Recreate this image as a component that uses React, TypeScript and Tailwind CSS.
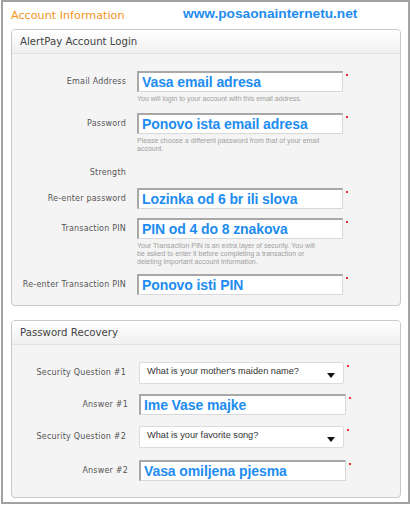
const LABEL = "font-['DejaVu_Sans',sans-serif] text-[8px] text-[#555] tracking-[0.2px]"
const BLUE = "font-['Liberation_Sans',Arial,sans-serif] font-bold text-[14px] tracking-[-0.1px] text-[#1e8cf0]"
const HELP = "font-['Liberation_Sans',Arial,sans-serif] text-[7px] leading-[8px] text-[#a0a0a0]"

function Star() {
  return <span className="ml-[3px] mt-[3px] w-[2px] h-[2px] bg-[#e33]" />
}

function TextField({ label, value, help, w = 'w-[206px]', mt }: { label: string; value: string; help?: string[]; w?: string; mt: string }) {
  return (
    <div className={`flex items-start ${mt}`}>
      <div className={`w-[114px] h-[21px] leading-[21px] text-right ${LABEL}`}>{label}</div>
      <div className="ml-[11px]">
        <div className="flex items-start">
          <div className={`${w} h-[21px] bg-white border border-t-2 border-l-2 border-t-[#a8a8a8] border-l-[#a8a8a8] border-r-[#d8d8d8] border-b-[#d8d8d8] pl-[3px] leading-[18px] ${BLUE}`}>
            {value}
          </div>
          <Star />
        </div>
        {help && (
          <div className={`mt-[3px] w-[200px] ${HELP}`}>
            {help.map((h) => (
              <div key={h}>{h}</div>
            ))}
          </div>
        )}
      </div>
    </div>
  )
}

function SelectField({ label, value, mt }: { label: string; value: string; mt: string }) {
  return (
    <div className={`flex items-start ${mt}`}>
      <div className={`w-[114px] h-[22px] leading-[22px] text-right ${LABEL}`}>{label}</div>
      <div className="ml-[13px] flex items-start">
        <div className="w-[205px] h-[22px] bg-white border border-[#dcdcdc] rounded-[2px] flex items-center pl-[7px] pr-[8px] font-['Liberation_Sans',Arial,sans-serif] text-[9.2px] text-[#333]">
          <span className="flex-1 -mt-[3px]">{value}</span>
          <svg width="8" height="5" viewBox="0 0 8 5" className="mt-[5px]">
            <path d="M0 0h8L4 5z" fill="#111" />
          </svg>
        </div>
        <Star />
      </div>
    </div>
  )
}

function Panel({ title, children, className }: { title: string; children: React.ReactNode; className?: string }) {
  return (
    <div className={`w-[390px] rounded-[4px] border border-[#c9c9c9] bg-[#f4f4f4] overflow-hidden ${className ?? ''}`}>
      <div className="h-[24px] bg-gradient-to-b from-white to-[#f0f0f0] border-b border-[#e2e2e2] pl-[8px] leading-[24px] font-['DejaVu_Sans',sans-serif] text-[10.2px] text-[#444]">
        {title}
      </div>
      {children}
    </div>
  )
}

export default function App() {
  return (
    <div className="w-[411px] h-[506px] bg-white">
      <div className="ml-px w-[409px] h-[504px] border-2 border-[#a2a2a2] pl-[8px]">
        <div className="h-[27px] flex items-center">
          <span className="w-[172px] font-['DejaVu_Sans',sans-serif] text-[11.2px] text-[#f7941d] mt-[2px]">Account Information</span>
          <span className="font-['Liberation_Sans',Arial,sans-serif] font-bold text-[13.7px] text-[#1e8cf0] -mt-[3px]">www.posaonainternetu.net</span>
        </div>
        <Panel title="AlertPay Account Login" className="h-[277px]">
          <TextField mt="mt-[17px]" label="Email Address" value="Vasa email adresa" help={['You will login to your account with this email address.']} />
          <TextField mt="mt-[10px]" label="Password" value="Ponovo ista email adresa" help={['Please choose a different password from that of your email', 'account.']} />
          <div className={`mt-[14px] w-[114px] text-right ${LABEL}`}>Strength</div>
          <TextField mt="mt-[9px]" label="Re-enter password" value="Lozinka od 6 br ili slova" />
          <TextField mt="mt-[9px]" label="Transaction PIN" value="PIN od 4 do 8 znakova" help={['Your Transaction PIN is an extra layer of security. You will', 'be asked to enter it before completing a transaction or', 'deleting important account information.']} />
          <TextField mt="mt-[8px]" label="Re-enter Transaction PIN" value="Ponovo isti PIN" />
        </Panel>
        <Panel title="Password Recovery" className="mt-[14px] h-[178px]">
          <SelectField mt="mt-[17px]" label="Security Question #1" value="What is your mother's maiden name?" />
          <div className="ml-[2px]">
            <TextField mt="mt-[10px]" w="w-[207px]" label="Answer #1" value="Ime Vase majke" />
          </div>
          <SelectField mt="mt-[11px]" label="Security Question #2" value="What is your favorite song?" />
          <div className="ml-[2px]">
            <TextField mt="mt-[12px]" w="w-[207px]" label="Answer #2" value="Vasa omiljena pjesma" />
          </div>
        </Panel>
      </div>
    </div>
  )
}
